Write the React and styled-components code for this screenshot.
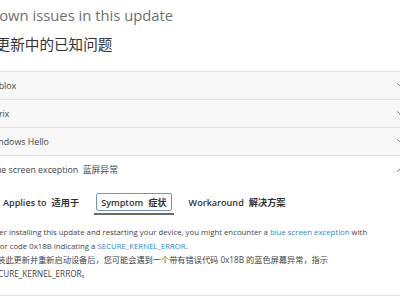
import React from "react";
import styled, { createGlobalStyle } from "styled-components";

const Global = createGlobalStyle`
  html, body { margin: 0; padding: 0; background: #fff; }
  body { font-family: "Open Sans", "Noto Sans CJK SC", sans-serif; }
`;

const Page = styled.div`
  width: 400px;
  height: 300px;
  overflow: hidden;
  background: #fff;
`;

const Inner = styled.div`
  margin-left: -19px;
  width: 428px;
`;

const Heading = styled.h1`
  margin: 0;
  padding-top: 1px;
  font-weight: 400;
  font-size: ${(p) => (p.$cjk ? "14.6px" : "14.8px")};
  line-height: 28px;
  color: ${(p) => (p.$cjk ? "#333" : "#6f6f6f")};
  white-space: nowrap;
`;

const Accordion = styled.div`
  margin-top: 13px;
  border-bottom: 1px solid #e2e2e2;
`;

const Row = styled.div`
  display: flex;
  align-items: center;
  justify-content: space-between;
  height: 27px;
  border-top: 1px solid #e2e2e2;
  background: ${(p) => (p.$open ? "#fff" : "#f8f8f8")};
  padding: 0 4px 0 7px;
  font-size: 8.8px;
  color: #444;
  white-space: nowrap;
`;

const Chevron = ({ up }) => (
  <svg width="8" height="5" viewBox="0 0 8 5" style={{ flex: "none" }}>
    <polyline
      points={up ? "0.5,4.5 4,1 7.5,4.5" : "0.5,0.5 4,4 7.5,0.5"}
      fill="none"
      stroke="#777"
      strokeWidth="1"
    />
  </svg>
);

const Panel = styled.div`
  padding: 0 36px 14px 8px;
`;

const TabList = styled.div`
  display: flex;
  align-items: center;
  gap: 12px;
  padding: 8px 0 0 9px;
  height: 22px;
`;

const Tab = styled.div`
  position: relative;
  height: 16px;
  display: flex;
  align-items: center;
  gap: 5px;
  padding: 0 4px;
  border: 1px solid ${(p) => (p.$active ? "#7395bb" : "transparent")};
  border-radius: 2px;
  font-size: 9.1px;
  font-weight: 600;
  color: #333;
  white-space: nowrap;
  &::after {
    content: "";
    display: ${(p) => (p.$active ? "block" : "none")};
    position: absolute;
    left: -3px;
    right: -3px;
    bottom: -5px;
    height: 2px;
    background: #6a6a6a;
  }
`;

const Zh = styled.span`
  font-size: 9.2px;
`;

const Body = styled.div`
  margin-top: 12px;
  color: #444;
`;

const Para = styled.p`
  margin: 0;
  font-size: ${(p) => (p.$cjk ? "8.2px" : "7.8px")};
  line-height: 14px;
`;

const Link = styled.a`
  color: #2f86d2;
  text-decoration: none;
`;

export default function App() {
  const rows = ["Roblox", "Citrix", "Windows Hello"];
  return (
    <Page>
      <Global />
      <Inner>
        <Heading>Known issues in this update</Heading>
        <Heading $cjk>此更新中的已知问题</Heading>
        <Accordion>
          {rows.map((r) => (
            <Row key={r}>
              <span>{r}</span>
              <Chevron />
            </Row>
          ))}
          <Row $open>
            <span>Blue screen exception&nbsp; 蓝屏异常</span>
            <Chevron up />
          </Row>
          <Panel>
            <TabList>
              <Tab>
                Applies to <Zh>适用于</Zh>
              </Tab>
              <Tab $active>
                Symptom <Zh>症状</Zh>
              </Tab>
              <Tab>
                Workaround <Zh>解决方案</Zh>
              </Tab>
            </TabList>
            <Body>
              <Para>
                After installing this update and restarting your device, you might encounter a{" "}
                <Link>blue screen exception</Link> with error code 0x18B indicating a{" "}
                <Link>SECURE_KERNEL_ERROR</Link>.
              </Para>
              <Para $cjk>
                安装此更新并重新启动设备后，您可能会遇到一个带有错误代码 0x18B 的蓝色屏幕异常，指示 SECURE_KERNEL_ERROR。
              </Para>
            </Body>
          </Panel>
        </Accordion>
      </Inner>
    </Page>
  );
}
